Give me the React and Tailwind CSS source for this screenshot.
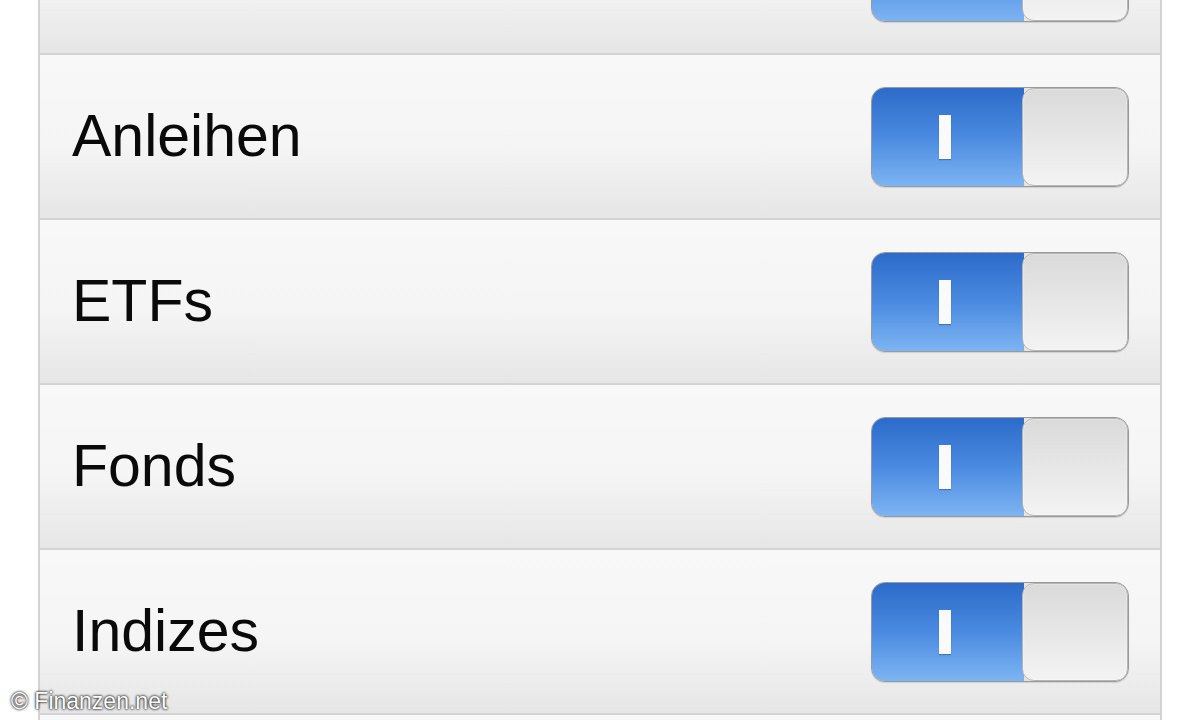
import React from "react";

const items = ["Aktien", "Anleihen", "ETFs", "Fonds", "Indizes", "Devisen"];

function Toggle() {
  return (
    <div className="flex h-[100px] w-[258px] overflow-hidden rounded-[14px] border border-[#9a9a9a] bg-[#e4e4e4] shadow-[0_1px_1px_rgba(0,0,0,0.12)]">
      <div className="flex w-[152px] items-center justify-center bg-gradient-to-b from-[#2c6bc9] via-[#4a8ae0] to-[#7db4f2]">
        <div className="-ml-[6px] h-[44px] w-[12px] bg-[#fafafa] shadow-[0_1px_1px_rgba(0,0,0,0.25)]" />
      </div>
      <div className="-ml-[2px] flex-1 rounded-[12px] border border-[#b5b5b5] bg-gradient-to-b from-[#dadada] to-[#f3f3f3] shadow-[inset_0_0_2px_rgba(255,255,255,0.9)]" />
    </div>
  );
}

export default function App() {
  return (
    <div className="relative h-[720px] w-[1200px] overflow-hidden bg-white" style={{ fontFamily: '"Liberation Sans", Arial, sans-serif' }}>
      <div className="mx-[38px] -mt-[110px] border-x-2 border-[#d2d2d2]">
        {items.map((name) => (
          <div
            key={name}
            className="flex h-[165px] items-center justify-between border-b-2 border-[#d4d4d4] bg-gradient-to-b from-[#f8f8f8] via-[#f5f5f5] via-55% to-[#e6e6e6] pl-[32px] pr-[31px]"
          >
            <span className="text-[59px] leading-none text-[#0a0a0a]">{name}</span>
            <Toggle />
          </div>
        ))}
      </div>
      <div className="absolute left-[11px] top-[684px] text-[23px] text-white [text-shadow:0_0_3px_rgba(0,0,0,0.9),0_0_2px_rgba(0,0,0,0.9)]">
        © Finanzen.net
      </div>
    </div>
  );
}
